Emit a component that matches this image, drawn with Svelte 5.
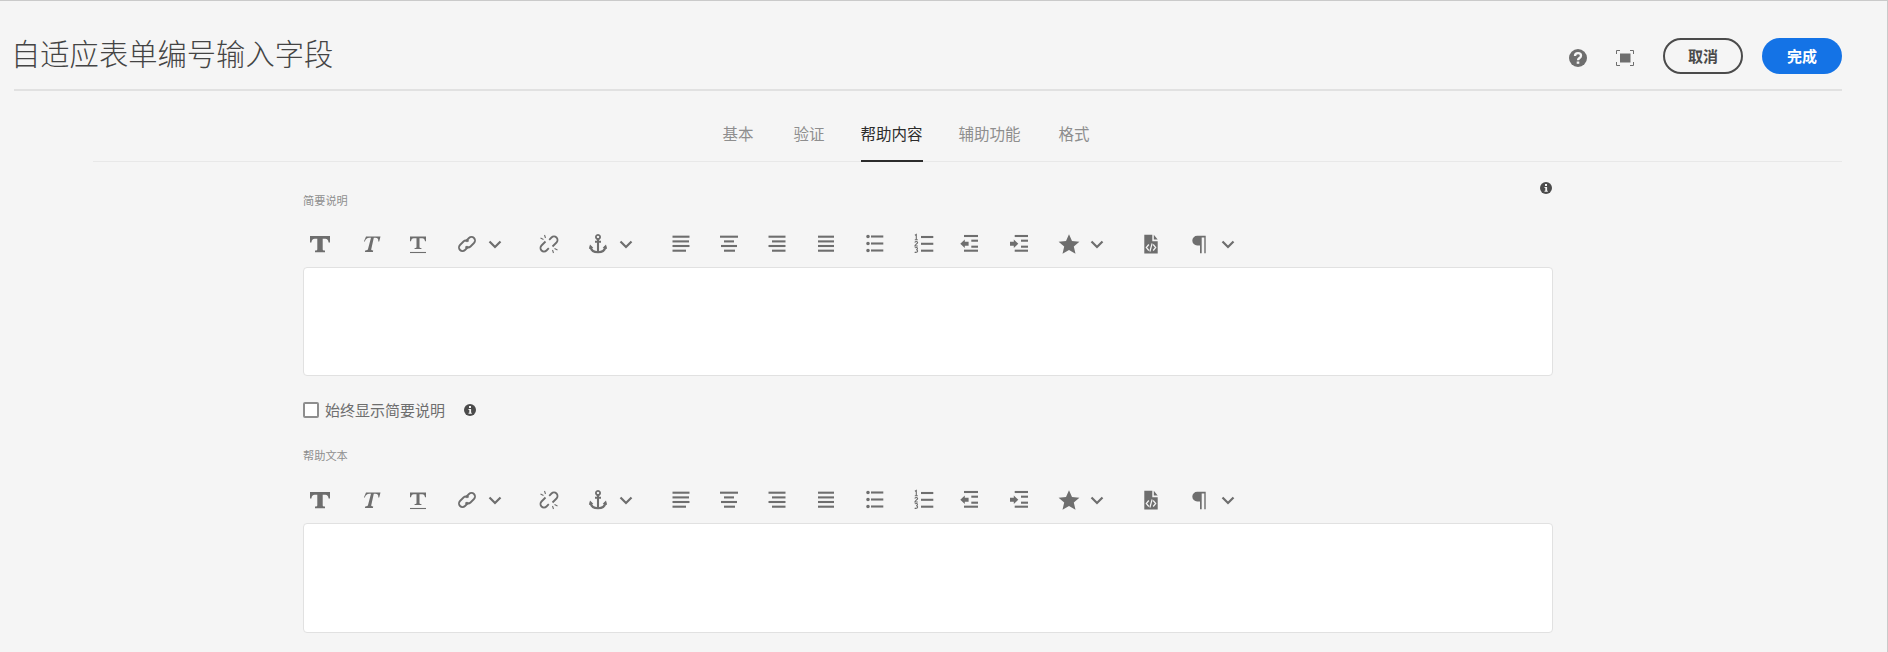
<script>
  const chain = [
    ['s', 'M10.500 9.500 14 6a3.500 3.500 0 0 1 5 5l-3.500 3.500a3.500 3.500 0 0 1-5 0'],
    ['s', 'M13.500 14.500 10 18a3.500 3.500 0 0 1-5-5l3.500-3.500a3.500 3.500 0 0 1 5 0']
  ];
  const lines = (rows) => rows.map(([a, b, y]) => ['l', `M${a} ${y}H${b}`]);
  const icons = {
    bold: [['f', 'M2 4h20v6.500h-1.400c-.4-2.400-1.200-3.700-3.400-3.700h-2.500v10.400c0 .9.500 1.300 2.300 1.400v1.600H7v-1.600c1.800-.1 2.300-.5 2.300-1.400V6.800H6.800c-2.200 0-3 1.300-3.400 3.700H2z']],
    italic: [['f', 'M7 4.500H21.500l-1.300 5h-.9c.2-2.400-.6-3.700-2.800-3.700h-1.700L12.300 17c-.3 1 .1 1.400 1.900 1.500l-.3 1.500H5.900l.3-1.500c1.800-.1 2.500-.5 2.800-1.500l3-11.200H10.300c-2.200 0-3.500 1.300-4.500 3.700h-.9z']],
    under: [['f', 'M4 4.500h16v4.800h-1c-.3-1.900-1-3-2.800-3h-2.700v8.600c0 .7.400 1 1.900 1.100V17H8.600v-1c1.500-.1 1.900-.4 1.900-1.100V6.300H7.800C6 6.300 5.300 7.400 5 9.300H4z'], ['t', 'M4 20.500H20']],
    link: chain,
    unlink: [
      ['s', 'M12.200 7.800 14.500 5.500a3.500 3.500 0 0 1 5 5L15.500 14.500'],
      ['s', 'M11.800 16.200 9.500 18.500a3.500 3.500 0 0 1-5-5L8.500 9.500'],
      ['t', 'M7.500 3 8.500 6M3.500 6 6.500 7.500M16.500 21 15.500 18M20.500 18 17.500 16.500']
    ],
    anchor: [
      ['l', 'M12 7v13M9 9.800h6M4.500 14.500c.5 3.500 3.200 5.800 7.500 5.800s7-2.300 7.500-5.800'],
      ['s', 'M12 2.800a2.100 2.100 0 1 0 .01 0'],
      ['f', 'M2.900 17 4 12.500 7.300 15.700zM21.100 17 20 12.500 16.700 15.700z']
    ],
    left: lines([[3.500, 20.500, 4.700], [3.500, 20, 9.400], [3.500, 20.500, 14], [3.500, 17, 18.700]]),
    center: lines([[3, 21, 4.700], [7, 17, 9.400], [4, 20, 14], [7, 18, 18.700]]),
    right: lines([[3.500, 20.500, 4.700], [7, 20.500, 9.400], [3.500, 20.500, 14], [7, 20.500, 18.700]]),
    justify: lines([[4, 20, 4.700], [4, 20, 9.400], [4, 20, 14], [4, 20, 18.700]]),
    ul: [
      ...lines([[8, 20.300, 4.500], [8, 20.300, 11.500], [8, 20.300, 18.500]]),
      ['f', 'M5 2.700a1.800 1.800 0 1 1 0 3.600 1.800 1.800 0 0 1 0-3.600zM5 9.700a1.800 1.800 0 1 1 0 3.600 1.800 1.800 0 0 1 0-3.600zM5 16.700a1.800 1.800 0 1 1 0 3.600 1.800 1.800 0 0 1 0-3.600z']
    ],
    ol: [
      ...lines([[9, 21.300, 5], [9, 21.300, 11.800], [9, 21.300, 18.700]]),
      ['n', 'M2.900 3.300 4.300 2.400V7.500M2.800 7.800H5.800M2.800 10.400C3.400 9.200 5.700 9.200 5.600 10.600 5.500 11.500 3.300 12.400 2.900 14H5.800M2.800 15.900C3.800 15.200 5.600 15.400 5.500 16.500 5.400 17.200 4.800 17.700 4.100 17.700 5 17.700 5.700 18.200 5.600 19.100 5.400 20.500 3.600 20.700 2.700 20']
    ],
    outdent: [
      ...lines([[5, 19, 4], [12.300, 19, 8.700], [12.300, 19, 14.700], [5, 19, 18.700]]),
      ['f', 'M1.300 11.700 5.800 7.500V9.700H9.600V13.700H5.800V15.900z']
    ],
    indent: [
      ...lines([[7.700, 21, 4], [14, 21, 8.700], [14, 21, 14.700], [7.700, 21, 18.700]]),
      ['f', 'M11.300 11.700 6.800 7.500V9.700H3V13.700H6.800V15.900z']
    ],
    star: [['f', 'M12 2.300l3 6.700 7.400.7-5.600 4.900 1.700 7.200-6.500-3.800-6.500 3.800 1.700-7.200-5.600-4.900 7.400-.7z']],
    doc: [
      ['f', 'M5.300 2.700h8v6.500h5.400v12.300H5.300z'],
      ['f', 'M14.800 2.700 18.700 7.600h-3.900z'],
      ['w', 'M9.800 12.500 7.300 15.500 9.800 18.500M14.200 12.500 16.700 15.500 14.200 18.500M13.100 11.500 10.900 19.500']
    ],
    para: [['f', 'M10.200 3.700H18.700V21.300H17.300V5.400H14.700V21.300H13V13.500H10.200a4.900 4.900 0 0 1 0-9.800z']],
    chevron: [['c', 'M6.500 9.500 12 15 17.500 9.500']]
  };

  const centers = [
    ['bold', 320], ['italic', 370.500], ['under', 418], ['link', 467], ['chevron', 495],
    ['unlink', 549], ['anchor', 598], ['chevron', 626], ['left', 680.500], ['center', 729],
    ['right', 777], ['justify', 826], ['ul', 875], ['ol', 924], ['outdent', 971],
    ['indent', 1019], ['star', 1069], ['chevron', 1097], ['doc', 1151], ['para', 1199],
    ['chevron', 1228]
  ];
  const tools = centers.map(([name, c], i) => ({
    name,
    offset: c - (i ? centers[i - 1][1] + 12 : 303) - 12
  }));
</script>

{#snippet infoIcon()}
  <svg class="info" viewBox="0 0 12 12" aria-hidden="true">
    <path d="M6 0a6 6 0 1 1 0 12A6 6 0 0 1 6 0z" fill="#4b4b4b" />
    <path d="M5 2.100h2v1.800H5zM4.500 5h2.600v3.800h.7v1H4.500v-1h.8V6h-.8z" fill="#f5f5f5" />
  </svg>
{/snippet}

{#snippet toolbar()}
  <div class="toolbar">
    {#each tools as tool}
      <button class="tool" style:margin-left="{tool.offset}px" aria-label={tool.name}>
        <svg viewBox="0 0 24 24" width="24" height="24" aria-hidden="true">
          {#each icons[tool.name] as [kind, d]}
            <path class={kind} {d} />
          {/each}
        </svg>
      </button>
    {/each}
  </div>
{/snippet}

<div class="page">
  <header class="head">
    <h1>自适应表单编号输入字段</h1>
    <div class="actions">
      <svg class="help" viewBox="0 0 18 18" width="18" height="18" aria-hidden="true">
        <path fill="#6e6e6e" d="M9 0a9 9 0 1 1 0 18A9 9 0 0 1 9 0z" />
        <path fill="none" stroke="#f5f5f5" stroke-width="2.300" d="M6 7c0-1.800 1.300-2.800 3-2.800s3 1 3 2.500c0 2.300-3 2.300-3 4.600" />
        <path fill="#f5f5f5" d="M7.700 12.500h2.600v2.300H7.700z" />
      </svg>
      <svg class="full" viewBox="0 0 18 16" width="18" height="16" aria-hidden="true">
        <path fill="none" stroke="#6e6e6e" d="M.5 4V.5H4M14 .5h3.500V4M.5 12v3.500H4M14 15.500h3.500V12" />
        <path fill="#6e6e6e" d="M4 3.500h10.500v9H4z" />
      </svg>
      <button class="btn cancel">取消</button>
      <button class="btn done">完成</button>
    </div>
  </header>

  <nav class="tabs">
    <span class="tab first">基本</span>
    <span class="tab">验证</span>
    <span class="tab active">帮助内容</span>
    <span class="tab">辅助功能</span>
    <span class="tab last">格式</span>
  </nav>

  <main class="form">
    <div class="label-row">
      <span class="label">简要说明</span>
      {@render infoIcon()}
    </div>
    {@render toolbar()}
    <div class="editor"></div>

    <div class="check-row">
      <span class="box"></span>
      <span class="check-text">始终显示简要说明</span>
      {@render infoIcon()}
    </div>

    <div class="label-row second">
      <span class="label">帮助文本</span>
    </div>
    {@render toolbar()}
    <div class="editor tall"></div>
  </main>
</div>

<style>
  :global(body) {
    margin: 0;
    background: #f5f5f5;
    font-family: "Noto Sans CJK SC", "Noto Sans", sans-serif;
  }
  .page {
    height: 652px;
    overflow: hidden;
    box-sizing: border-box;
    border-top: 1px solid #cacaca;
    border-right: 1px solid #cacaca;
    background: #f5f5f5;
  }
  .head {
    display: flex;
    align-items: center;
    justify-content: space-between;
    box-sizing: border-box;
    height: 90px;
    margin: 0 45px 0 14px;
    padding-top: 21px;
    border-bottom: 2px solid #e1e1e1;
  }
  h1 {
    margin: -7px 0 0 -3px;
    font-size: 29.300px;
    font-weight: 300;
    line-height: 40px;
    color: #444;
  }
  .actions {
    display: flex;
    align-items: center;
  }
  .help {
    margin-top: 4px;
  }
  .full {
    margin: 4px 29px 0 29px;
  }
  .btn {
    box-sizing: border-box;
    height: 36px;
    padding: 0;
    border-radius: 18px;
    font: 700 15px/1 "Noto Sans CJK SC", sans-serif;
  }
  .cancel {
    width: 80px;
    border: 2px solid #4b4b4b;
    background: transparent;
    color: #4b4b4b;
  }
  .done {
    width: 80px;
    margin-left: 19px;
    border: 0;
    background: #1473e6;
    color: #fff;
  }
  .tabs {
    display: flex;
    gap: 36px;
    box-sizing: border-box;
    height: 71px;
    margin: 0 45px 0 93px;
    padding: 30px 0 0 629.500px;
    border-bottom: 1px solid #e8e8e8;
  }
  .tab {
    box-sizing: border-box;
    height: 41px;
    font-size: 15.500px;
    line-height: 24px;
    color: #8e8e8e;
  }
  .first {
    margin-right: 4px;
  }
  .last {
    margin-left: 2px;
  }
  .active {
    color: #2c2c2c;
    border-bottom: 2px solid #2c2c2c;
  }
  .form {
    width: 1250px;
    margin-left: 303px;
    padding-top: 20px;
  }
  .label-row {
    display: flex;
    justify-content: space-between;
    align-items: flex-start;
    height: 39px;
    padding-right: 1px;
    box-sizing: border-box;
  }
  .second {
    height: 30px;
  }
  .label {
    margin-top: 10px;
    font-size: 11.200px;
    line-height: 16px;
    color: #8e8e8e;
  }
  .second .label {
    margin-top: 0;
  }
  .info {
    display: block;
    flex: none;
    width: 12px;
    height: 12px;
  }
  .toolbar {
    display: flex;
    align-items: center;
    height: 46px;
  }
  .tool {
    display: block;
    flex: none;
    width: 24px;
    height: 24px;
    padding: 0;
    border: 0;
    background: none;
  }
  .tool svg {
    display: block;
  }
  .f {
    fill: #6e6e6e;
  }
  .s {
    fill: none;
    stroke: #6e6e6e;
    stroke-width: 1.800;
  }
  .l {
    fill: none;
    stroke: #6e6e6e;
    stroke-width: 2.100;
  }
  .t {
    fill: none;
    stroke: #6e6e6e;
    stroke-width: 1.100;
  }
  .n {
    fill: none;
    stroke: #6e6e6e;
    stroke-width: 1.100;
  }
  .c {
    fill: none;
    stroke: #6e6e6e;
    stroke-width: 2.200;
  }
  .w {
    fill: none;
    stroke: #f5f5f5;
    stroke-width: 1.200;
  }
  .editor {
    box-sizing: border-box;
    height: 109px;
    background: #fff;
    border: 1px solid #e1e1e1;
    border-radius: 4px;
  }
  .tall {
    height: 110px;
  }
  .check-row {
    display: flex;
    align-items: center;
    height: 32px;
    margin-top: 18px;
    margin-bottom: 21px;
  }
  .box {
    box-sizing: border-box;
    width: 16px;
    height: 16px;
    background: #fff;
    border: 2px solid #8e8e8e;
    border-radius: 2px;
  }
  .check-text {
    margin: 0 19px 0 6px;
    font-size: 15px;
    line-height: 20px;
    color: #6e6e6e;
  }
</style>
